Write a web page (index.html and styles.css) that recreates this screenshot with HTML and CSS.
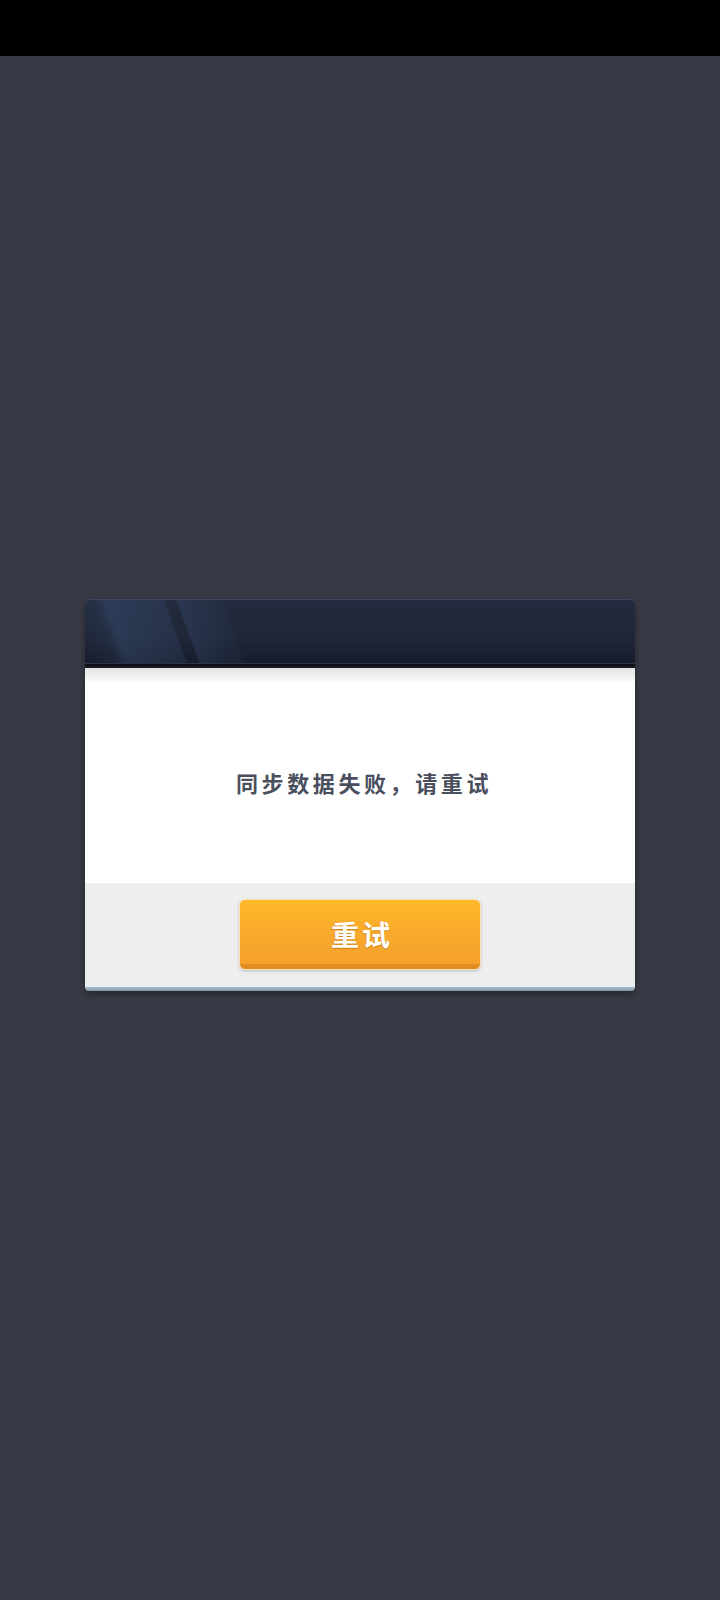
FILE: index.html
```html
<!DOCTYPE html>
<html lang="zh-CN">
<head>
<meta charset="utf-8">
<title>同步数据失败</title>
<link rel="stylesheet" href="styles.css">
</head>
<body>
<div class="statusbar"></div>
<main class="stage">
  <section class="dialog">
    <header class="dialog-head"></header>
    <div class="head-rule"></div>
    <div class="body-band"></div>
    <div class="dialog-body">
      <p class="message">同步数据失败，请重试</p>
    </div>
    <footer class="dialog-foot">
      <button class="retry" type="button">重试</button>
    </footer>
    <div class="foot-rule"></div>
  </section>
</main>
</body>
</html>
```
FILE: styles.css
```css
html, body {
  margin: 0;
  padding: 0;
}
body {
  width: 720px;
  height: 1600px;
  background: #373a44;
  font-family: "Noto Sans CJK SC", "Noto Sans", sans-serif;
  overflow: hidden;
}
.statusbar {
  height: 56px;
  background: #000;
}
.stage {
  display: flex;
  justify-content: center;
  padding-top: 543px;
}
.dialog {
  width: 550px;
  display: flex;
  flex-direction: column;
  border-radius: 6px;
  box-shadow: 0 3px 6px rgba(0, 0, 0, 0.35);
}
.dialog-head {
  height: 64px;
  border-top: 1px solid #3b4863;
  border-radius: 6px 6px 0 0;
  background:
    linear-gradient(70deg,
      rgba(255,255,255,0) 0px,
      rgba(70,100,150,0.10) 30px,
      rgba(70,100,150,0.30) 41px,
      rgba(70,100,150,0.18) 95px,
      rgba(255,255,255,0) 97px,
      rgba(255,255,255,0) 107px,
      rgba(70,100,150,0.22) 109px,
      rgba(70,100,150,0.05) 150px,
      rgba(255,255,255,0) 152px),
    linear-gradient(180deg, #232b3e 0%, #1f2637 60%, #171c2a 100%);
  box-shadow: inset 0 -1px 0 #2b3344;
}
.head-rule {
  height: 4px;
  background: linear-gradient(180deg, #0b0d13, #1a1d24);
}
.body-band {
  height: 15px;
  background: linear-gradient(180deg, #e2e2e2, #f4f4f4 70%, #ffffff);
}
.dialog-body {
  height: 200px;
  background: #ffffff;
  display: flex;
  align-items: center;
  justify-content: center;
}
.message {
  margin: 0 0 0 8px;
  padding-bottom: 2px;
  font-size: 22px;
  font-weight: 700;
  letter-spacing: 3.6px;
  color: #4a4f5d;
}
.dialog-foot {
  height: 104px;
  background: #eeeeee;
  display: flex;
  justify-content: center;
  padding-top: 16px;
  box-sizing: border-box;
}
.retry {
  width: 242px;
  height: 71px;
  border: 1px solid #fbe3bd;
  border-radius: 6px;
  background: linear-gradient(180deg, #fdb82a 0%, #f8a82c 55%, #f5a22d 92%, #e38f22 93%, #e08c22 100%);
  box-shadow: 0 1px 3px rgba(0, 0, 0, 0.22);
  color: #ffffff;
  font-family: "Noto Sans CJK SC", "Noto Sans", sans-serif;
  font-size: 28px;
  font-weight: 700;
  letter-spacing: 3px;
  text-shadow: 0 1px 1px rgba(150, 80, 0, 0.45);
  padding: 0 0 2px 4px;
}
.foot-rule {
  height: 4px;
  background: linear-gradient(180deg, #a9c0cf, #7f97a8);
  border-radius: 0 0 5px 5px;
}
```
